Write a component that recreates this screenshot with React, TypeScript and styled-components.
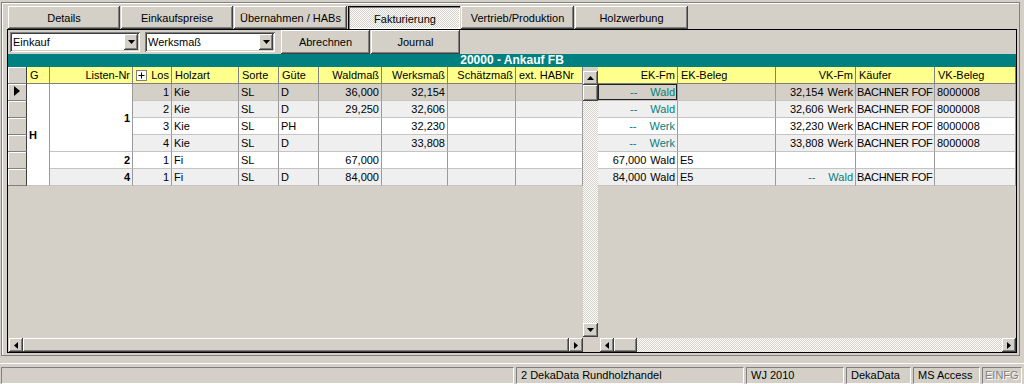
import React from "react";
import styled, { createGlobalStyle, css } from "styled-components";

const FACE = "#d4d0c8";
const SHADOW = "#808080";
const DARK = "#404040";
const TEAL = "#008080";
const HEAD = "#ffff8c";
const ALT = "#efefef";

const GlobalStyle = createGlobalStyle`
  html, body { margin: 0; padding: 0; background: ${FACE}; }
  body { font-family: "Liberation Sans", Arial, sans-serif; font-size: 11px; color: #000; }
  * { box-sizing: border-box; }
`;

const raised = css`
  background: ${FACE};
  box-shadow: inset -1px -1px ${DARK}, inset 1px 1px #fff, inset -2px -2px ${SHADOW};
`;

const dither = css`
  background: repeating-conic-gradient(#fff 0 25%, ${FACE} 0 50%) 0 0 / 2px 2px;
`;

const Screen = styled.div`
  width: 1024px;
  height: 384px;
  overflow: hidden;
  display: flex;
  flex-direction: column;
`;

const Frame = styled.div`
  margin: 2px 4px 0 1px;
  border: 1px solid ${SHADOW};
  box-shadow: inset 1px 1px #fff;
  padding: 3px 2px 2px 5px;
`;

const TabBar = styled.div`
  display: flex;
  gap: 1px;
  padding-left: 1px;
`;

const Tab = styled.div<{ $w: number; $active?: boolean }>`
  width: ${p => p.$w}px;
  height: 23px;
  display: flex;
  align-items: center;
  justify-content: center;
  ${p => p.$active
    ? css`
        ${dither};
        box-shadow: inset 1px 1px #000, inset 2px 2px ${SHADOW}, inset -1px -1px #fff;
        padding-top: 2px;
        padding-left: 2px;
      `
    : raised}
`;

const Panel = styled.div`
  border: 1px solid #000;
  display: flex;
  flex-direction: column;
`;

const Toolbar = styled.div`
  height: 24px;
  display: flex;
  align-items: center;
  padding-left: 2px;
`;

const Combo = styled.div<{ $w: number }>`
  width: ${p => p.$w}px;
  height: 20px;
  margin-right: 5px;
  background: #fff;
  display: flex;
  align-items: center;
  padding-left: 3px;
  box-shadow: inset 1px 1px ${SHADOW}, inset -1px -1px #fff, inset 2px 2px ${DARK}, inset -2px -2px ${FACE};
`;

const ComboButton = styled.div`
  margin-left: auto;
  margin-right: 2px;
  width: 14px;
  height: 16px;
  display: flex;
  align-items: center;
  justify-content: center;
  ${raised};
`;

const ToolButton = styled.div<{ $w: number }>`
  width: ${p => p.$w}px;
  height: 24px;
  margin-left: 1px;
  display: flex;
  align-items: center;
  justify-content: center;
  ${raised};
  &:first-of-type { margin-left: 0; }
`;

const TitleBand = styled.div`
  height: 13px;
  background: ${TEAL};
  color: #fff;
  font-weight: bold;
  font-size: 12px;
  text-align: center;
  line-height: 13px;
`;

const GridBody = styled.div`
  display: grid;
  grid-template-columns: 575px 15px 418px;
  grid-template-rows: 271px 14px;
  height: 285px;
`;

const Pane = styled.div`
  overflow: hidden;
  background: ${FACE};
`;

const Table = styled.table`
  width: 100%;
  table-layout: fixed;
  border-collapse: separate;
  border-spacing: 0;
`;

const Col = styled.col<{ $w: number }>`
  width: ${p => p.$w}px;
`;

const Th = styled.th<{ $align?: string }>`
  height: 17px;
  padding: 0 2px 0 3px;
  background: ${HEAD};
  font-weight: normal;
  text-align: ${p => p.$align || "left"};
  white-space: nowrap;
  overflow: hidden;
  border-right: 1px solid ${SHADOW};
  border-bottom: 1px solid ${SHADOW};
`;

const CornerTh = styled.th`
  height: 17px;
  padding: 0;
  background: ${FACE};
  box-shadow: inset 1px 1px #fff;
  border-right: 1px solid ${DARK};
  border-bottom: 1px solid ${SHADOW};
`;

const Td = styled.td<{ $align?: string; $bg: string; $bold?: boolean; $focus?: boolean; $tight?: boolean }>`
  height: 17px;
  padding: 0 2px 0 ${p => (p.$tight ? 1 : 2)}px;
  background: ${p => p.$bg};
  text-align: ${p => p.$align || "left"};
  font-weight: ${p => (p.$bold ? "bold" : "normal")};
  letter-spacing: ${p => (p.$tight ? "-0.3px" : "normal")};
  white-space: nowrap;
  overflow: hidden;
  border-right: 1px solid #9a9a9a;
  border-bottom: 1px solid #c4c4c4;
  vertical-align: middle;
  ${p => p.$focus && css`box-shadow: inset 0 0 0 1px #202020;`}
`;

const IndicatorTd = styled.td`
  height: 17px;
  padding: 0 0 0 6px;
  background: ${FACE};
  box-shadow: inset 1px 1px #fff;
  border-right: 1px solid ${DARK};
  border-bottom: 1px solid ${SHADOW};
`;

const HeadSplit = styled.div`
  display: flex;
  align-items: center;
  justify-content: space-between;
`;

const PlusBox = styled.span`
  width: 11px;
  height: 11px;
  background: #fff;
  border: 1px solid ${SHADOW};
  display: flex;
  align-items: center;
  justify-content: center;
`;

const Qty = styled.div<{ $teal?: boolean }>`
  display: flex;
  justify-content: flex-end;
  color: ${p => (p.$teal ? TEAL : "#000")};
`;

const QtyNum = styled.span<{ $dash?: boolean }>`
  margin-right: ${p => (p.$dash ? 13 : 4)}px;
`;

const VScroll = styled.div`
  display: flex;
  flex-direction: column;
  padding: 4px 0 1px 0;
  background: ${FACE};
`;

const HScroll = styled.div<{ $pad: number }>`
  display: flex;
  padding-left: ${p => p.$pad}px;
  background: ${FACE};
`;

const ArrowBtn = styled.div<{ $len?: number }>`
  flex: 0 0 ${p => p.$len || 14}px;
  display: flex;
  align-items: center;
  justify-content: center;
  ${raised};
`;

const Thumb = styled.div<{ $len?: number }>`
  flex: ${p => (p.$len ? `0 0 ${p.$len}px` : "1")};
  ${raised};
`;

const Track = styled.div`
  flex: 1;
  ${dither};
`;

const Corner = styled.div`
  background: ${FACE};
`;

const StatusBar = styled.div`
  margin-top: 7px;
  border-top: 1px solid #fff;
  padding: 3px 2px 0 1px;
  display: flex;
  gap: 2px;
`;

const StatusPanel = styled.div<{ $w?: number; $muted?: boolean }>`
  ${p => (p.$w ? `flex: 0 0 ${p.$w}px;` : "flex: 1;")}
  height: 17px;
  line-height: 15px;
  padding: 0 ${p => (p.$muted ? 2 : 4)}px;
  border: 1px solid;
  border-color: ${SHADOW} #fff #fff ${SHADOW};
  white-space: nowrap;
  overflow: hidden;
  color: ${p => (p.$muted ? SHADOW : "#000")};
  text-shadow: ${p => (p.$muted ? "1px 1px #fff" : "none")};
`;

function Tri({ dir }: { dir: "up" | "down" | "left" | "right" }) {
  const pts = {
    up: "0,4 7,4 3.5,0",
    down: "0,0 7,0 3.5,4",
    left: "4,0 4,7 0,3.5",
    right: "0,0 0,7 4,3.5",
  }[dir];
  const vertical = dir === "up" || dir === "down";
  return (
    <svg width={vertical ? 7 : 4} height={vertical ? 4 : 7} viewBox={vertical ? "0 0 7 4" : "0 0 4 7"}>
      <polygon points={pts} fill="#000" />
    </svg>
  );
}

function RowMarker() {
  return (
    <svg width="6" height="10" viewBox="0 0 6 10">
      <polygon points="0,0 6,5 0,10" fill="#000" />
    </svg>
  );
}

const tabs = [
  { label: "Details", w: 112 },
  { label: "Einkaufspreise", w: 112 },
  { label: "Übernahmen / HABs", w: 113 },
  { label: "Fakturierung", w: 112, active: true },
  { label: "Vertrieb/Produktion", w: 113 },
  { label: "Holzwerbung", w: 113 },
];

const leftCols = [19, 23, 83, 39, 67, 40, 40, 63, 66, 68, 67];
const rightCols = [80, 98, 80, 79, 81];

const leftRows = [
  { liste: "1", span: 4, los: "1", holz: "Kie", sorte: "SL", guete: "D", wald: "36,000", werk: "32,154" },
  { los: "2", holz: "Kie", sorte: "SL", guete: "D", wald: "29,250", werk: "32,606" },
  { los: "3", holz: "Kie", sorte: "SL", guete: "PH", wald: "", werk: "32,230" },
  { los: "4", holz: "Kie", sorte: "SL", guete: "D", wald: "", werk: "33,808" },
  { liste: "2", span: 1, los: "1", holz: "Fi", sorte: "SL", guete: "", wald: "67,000", werk: "" },
  { liste: "4", span: 1, los: "1", holz: "Fi", sorte: "SL", guete: "D", wald: "84,000", werk: "" },
];

type Amount = [string, string] | null;

const rightRows: { ek: Amount; ekBeleg: string; vk: Amount; kaeufer: string; vkBeleg: string }[] = [
  { ek: ["--", "Wald"], ekBeleg: "", vk: ["32,154", "Werk"], kaeufer: "BACHNER FOF", vkBeleg: "8000008" },
  { ek: ["--", "Wald"], ekBeleg: "", vk: ["32,606", "Werk"], kaeufer: "BACHNER FOF", vkBeleg: "8000008" },
  { ek: ["--", "Werk"], ekBeleg: "", vk: ["32,230", "Werk"], kaeufer: "BACHNER FOF", vkBeleg: "8000008" },
  { ek: ["--", "Werk"], ekBeleg: "", vk: ["33,808", "Werk"], kaeufer: "BACHNER FOF", vkBeleg: "8000008" },
  { ek: ["67,000", "Wald"], ekBeleg: "E5", vk: null, kaeufer: "", vkBeleg: "" },
  { ek: ["84,000", "Wald"], ekBeleg: "E5", vk: ["--", "Wald"], kaeufer: "BACHNER FOF", vkBeleg: "" },
];

const rowBg = (i: number) => (i === 0 ? FACE : i % 2 === 1 ? ALT : "#fff");

function AmountCell({ value }: { value: Amount }) {
  if (!value) return null;
  const dash = value[0] === "--";
  return (
    <Qty $teal={dash}>
      <QtyNum $dash={dash}>{value[0]}</QtyNum>
      <span>{value[1]}</span>
    </Qty>
  );
}

function LeftGrid() {
  return (
    <Table>
      <colgroup>
        {leftCols.map((w, i) => <Col key={i} $w={w} />)}
      </colgroup>
      <thead>
        <tr>
          <CornerTh />
          <Th>G</Th>
          <Th $align="right">Listen-Nr</Th>
          <Th>
            <HeadSplit>
              <PlusBox>
                <svg width="7" height="7" viewBox="0 0 7 7">
                  <path d="M3.5 0.5v6M0.5 3.5h6" stroke="#000" strokeWidth="1" />
                </svg>
              </PlusBox>
              <span>Los</span>
            </HeadSplit>
          </Th>
          <Th>Holzart</Th>
          <Th>Sorte</Th>
          <Th>Güte</Th>
          <Th $align="right">Waldmaß</Th>
          <Th $align="right">Werksmaß</Th>
          <Th $align="right">Schätzmaß</Th>
          <Th>ext. HABNr</Th>
        </tr>
      </thead>
      <tbody>
        {leftRows.map((r, i) => {
          const bg = rowBg(i);
          return (
            <tr key={i}>
              <IndicatorTd>{i === 0 && <RowMarker />}</IndicatorTd>
              {i === 0 && <Td $bg="#fff" $bold rowSpan={6}>H</Td>}
              {r.liste && (
                <Td $bg={r.span > 1 || i === 4 ? "#fff" : bg} $bold $align="right" rowSpan={r.span}>
                  {r.liste}
                </Td>
              )}
              <Td $bg={bg} $align="right">{r.los}</Td>
              <Td $bg={bg}>{r.holz}</Td>
              <Td $bg={bg}>{r.sorte}</Td>
              <Td $bg={bg}>{r.guete}</Td>
              <Td $bg={bg} $align="right">{r.wald}</Td>
              <Td $bg={bg} $align="right">{r.werk}</Td>
              <Td $bg={bg} />
              <Td $bg={bg} />
            </tr>
          );
        })}
      </tbody>
    </Table>
  );
}

function RightGrid() {
  return (
    <Table>
      <colgroup>
        {rightCols.map((w, i) => <Col key={i} $w={w} />)}
      </colgroup>
      <thead>
        <tr>
          <Th $align="right">EK-Fm</Th>
          <Th>EK-Beleg</Th>
          <Th $align="right">VK-Fm</Th>
          <Th>Käufer</Th>
          <Th>VK-Beleg</Th>
        </tr>
      </thead>
      <tbody>
        {rightRows.map((r, i) => {
          const bg = rowBg(i);
          return (
            <tr key={i}>
              <Td $bg={bg} $focus={i === 0}><AmountCell value={r.ek} /></Td>
              <Td $bg={bg}>{r.ekBeleg}</Td>
              <Td $bg={bg}><AmountCell value={r.vk} /></Td>
              <Td $bg={bg} $tight>{r.kaeufer}</Td>
              <Td $bg={bg}>{r.vkBeleg}</Td>
            </tr>
          );
        })}
      </tbody>
    </Table>
  );
}

export default function App() {
  return (
    <Screen>
      <GlobalStyle />
      <Frame>
        <TabBar>
          {tabs.map(t => (
            <Tab key={t.label} $w={t.w} $active={t.active}>{t.label}</Tab>
          ))}
        </TabBar>
        <Panel>
          <Toolbar>
            <Combo $w={130}>
              Einkauf
              <ComboButton><Tri dir="down" /></ComboButton>
            </Combo>
            <Combo $w={130}>
              Werksmaß
              <ComboButton><Tri dir="down" /></ComboButton>
            </Combo>
            <ToolButton $w={89}>Abrechnen</ToolButton>
            <ToolButton $w={89}>Journal</ToolButton>
          </Toolbar>
          <TitleBand>20000 - Ankauf FB</TitleBand>
          <GridBody>
            <Pane><LeftGrid /></Pane>
            <VScroll>
              <ArrowBtn><Tri dir="up" /></ArrowBtn>
              <Thumb $len={16} />
              <Track />
              <ArrowBtn><Tri dir="down" /></ArrowBtn>
            </VScroll>
            <Pane><RightGrid /></Pane>
            <HScroll $pad={1}>
              <ArrowBtn><Tri dir="left" /></ArrowBtn>
              <Thumb />
              <ArrowBtn><Tri dir="right" /></ArrowBtn>
            </HScroll>
            <Corner />
            <HScroll $pad={2}>
              <ArrowBtn><Tri dir="left" /></ArrowBtn>
              <Thumb $len={23} />
              <Track />
              <ArrowBtn><Tri dir="right" /></ArrowBtn>
            </HScroll>
          </GridBody>
        </Panel>
      </Frame>
      <StatusBar>
        <StatusPanel />
        <StatusPanel $w={228}>2 DekaData Rundholzhandel</StatusPanel>
        <StatusPanel $w={98}>WJ 2010</StatusPanel>
        <StatusPanel $w={65}>DekaData</StatusPanel>
        <StatusPanel $w={67}>MS Access</StatusPanel>
        <StatusPanel $w={40} $muted>EINFG</StatusPanel>
      </StatusBar>
    </Screen>
  );
}
